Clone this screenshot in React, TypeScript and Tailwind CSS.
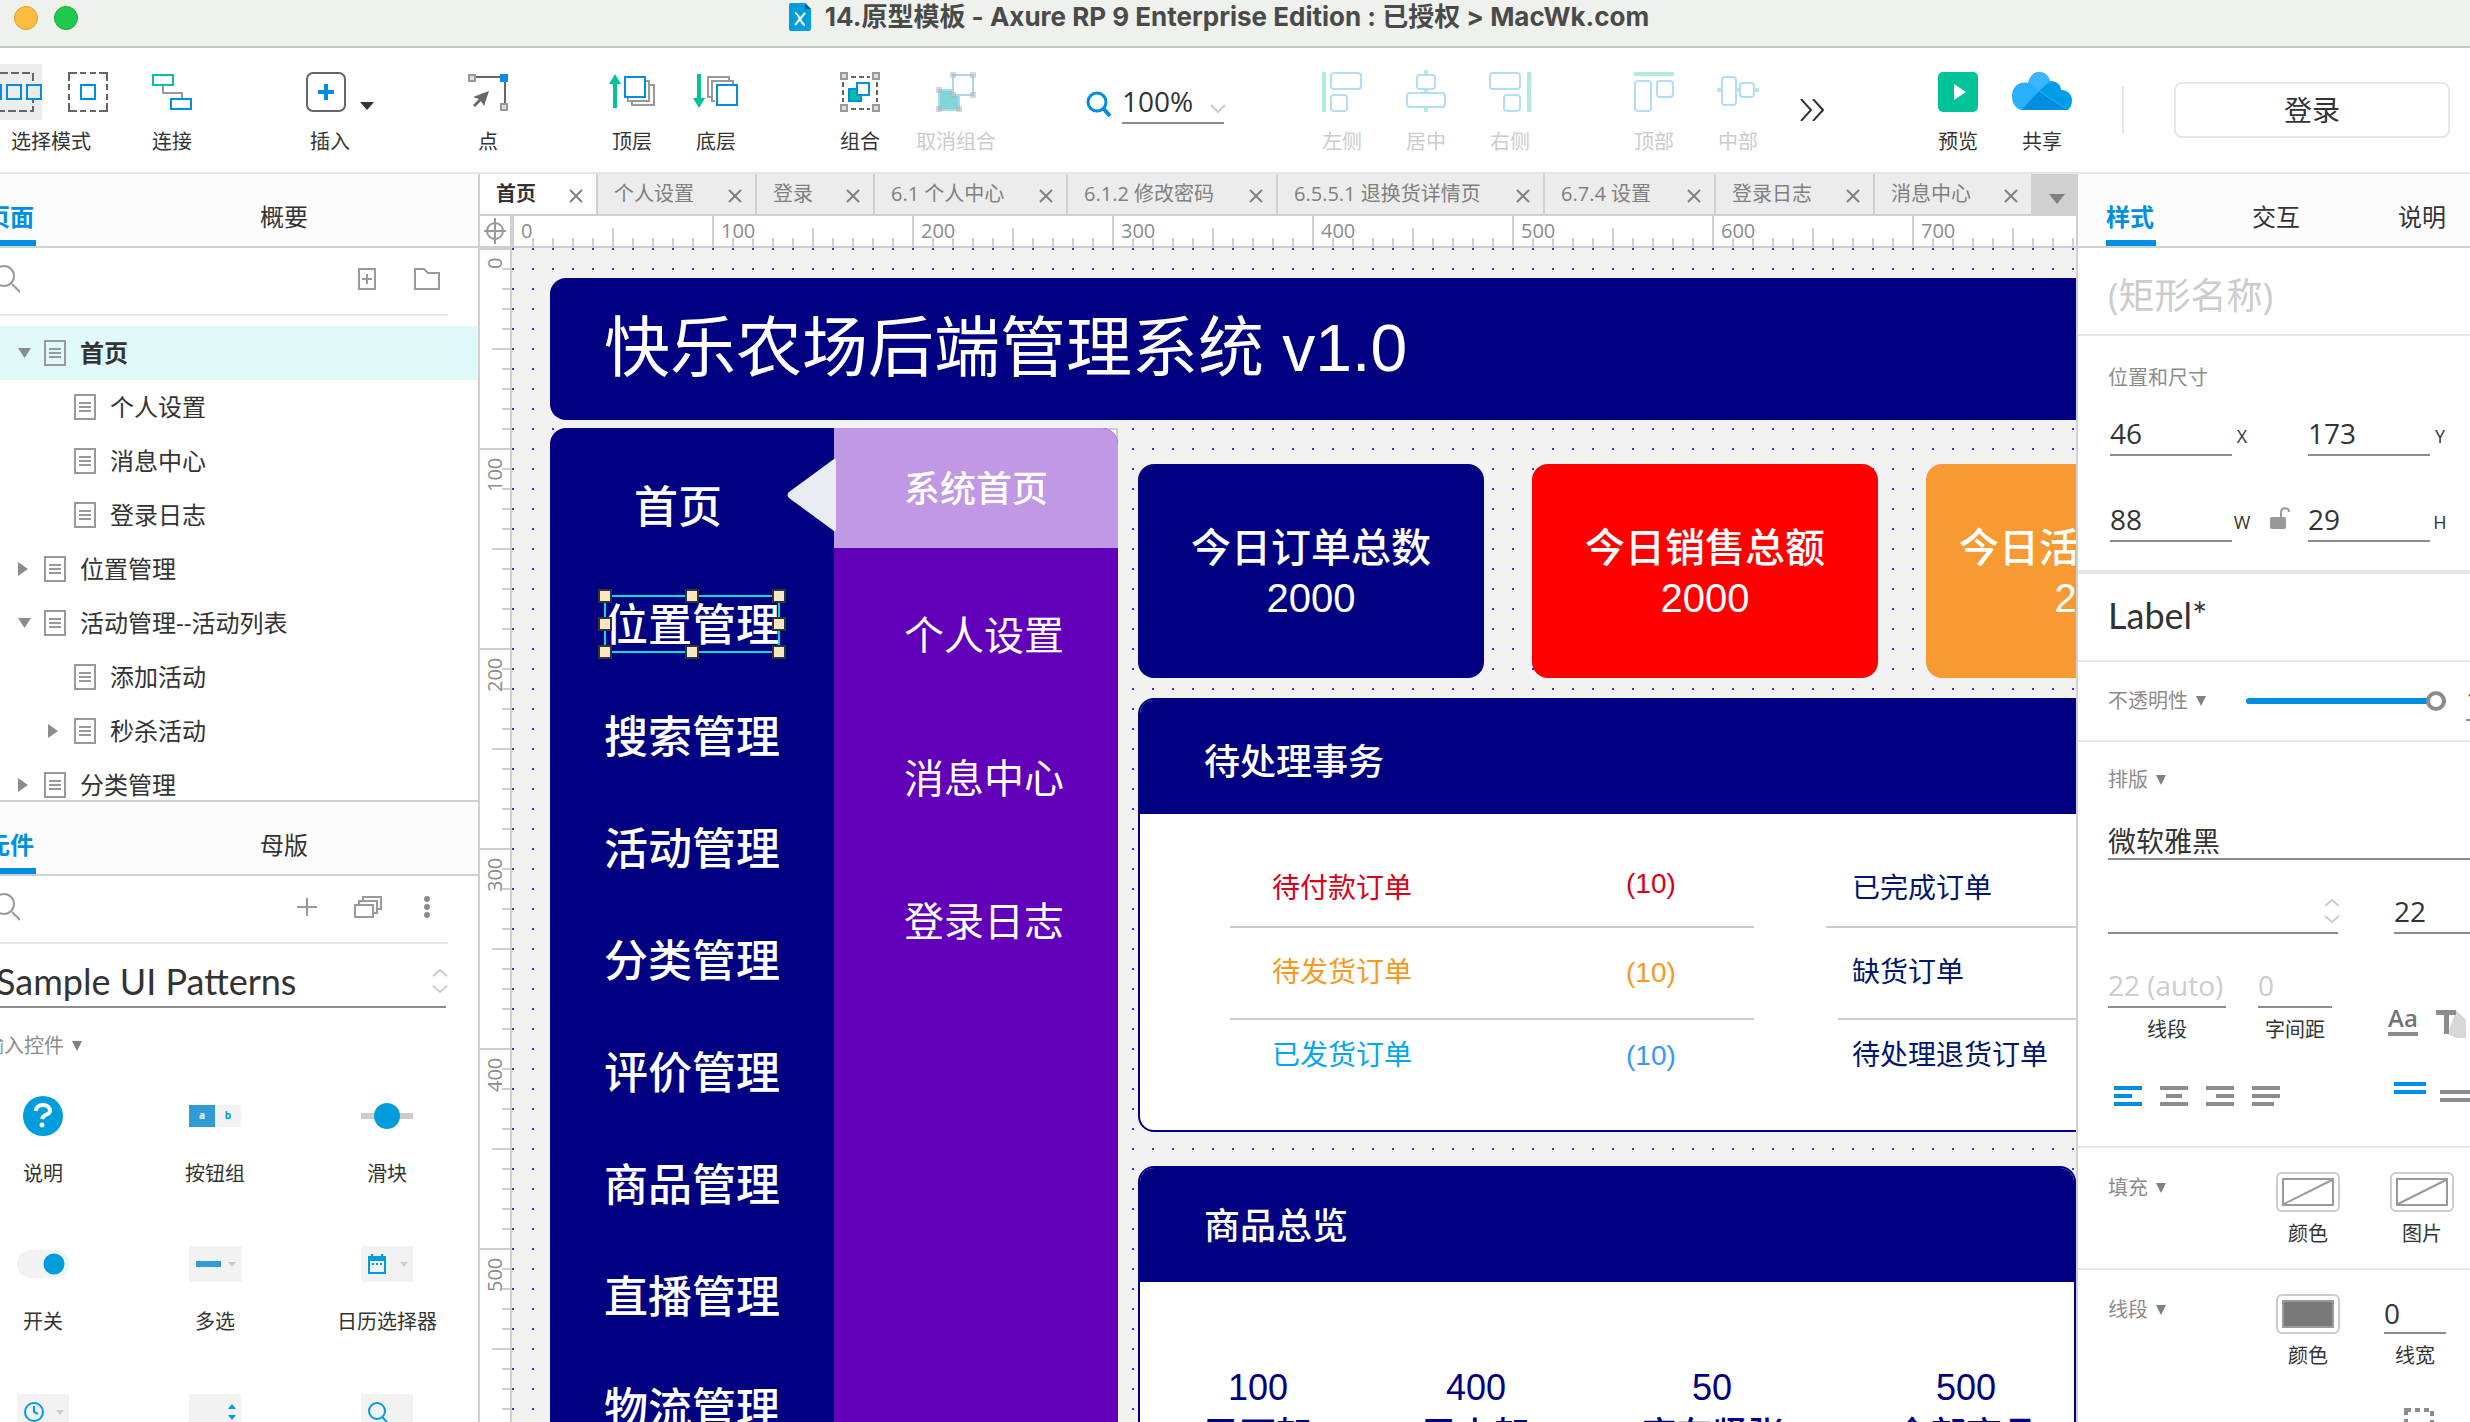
import React, { useState } from 'react';
import clsx from 'clsx';

/* ---------- Toolbar icons ---------- */

const BLUE = '#008fe0';
const GREEN = '#00c39a';
const GREY = '#999999';

const ContainIcon = () => (
  <svg width="42" height="56" viewBox="0 0 42 56" fill="none">
    <path d="M0 9H33V47H0" stroke="#666" strokeWidth="2" strokeDasharray="8 3" />
    <g fill="#ececec" stroke={BLUE} strokeWidth="2">
      <rect x="-10" y="21" width="11" height="14" />
      <rect x="7" y="21" width="14" height="14" />
      <rect x="27" y="21" width="14" height="14" />
    </g>
  </svg>
);

const IntersectIcon = () => (
  <svg width="40" height="40" viewBox="0 0 40 40" fill="none">
    <path d="M1 9V1H9M12 1H18M22 1H28M31 1H39V9M39 12V18M39 22V28M39 31V39H31M28 39H22M18 39H12M9 39H1V31M1 28V22M1 18V12" stroke="#666" strokeWidth="2" />
    <rect x="13" y="13" width="14" height="14" stroke={BLUE} strokeWidth="2" />
  </svg>
);

const ConnectIcon = () => (
  <svg width="40" height="40" viewBox="0 0 40 40" fill="none" strokeWidth="2">
    <path d="M11 14V21H30V26" stroke={GREY} />
    <rect x="1" y="3" width="20" height="10" stroke={GREEN} />
    <rect x="19" y="27" width="20" height="10" stroke={BLUE} />
  </svg>
);

const InsertIcon = () => (
  <svg width="88" height="40" viewBox="0 0 88 40" fill="none">
    <rect x="21" y="1" width="38" height="38" rx="6" stroke="#666" strokeWidth="2" />
    <path d="M40 12V28M32 20H48" stroke={BLUE} strokeWidth="4" />
    <path d="M74 30H88L81 38Z" fill="#333" />
  </svg>
);

const PointIcon = () => (
  <svg width="40" height="40" viewBox="0 0 40 40" fill="none">
    <path d="M8 5H33M37 10V32" stroke="#666" strokeWidth="2" />
    <rect x="1" y="3" width="6" height="6" fill="#ddd" stroke={GREY} strokeWidth="2" />
    <rect x="33" y="32" width="6" height="6" fill="#ddd" stroke={GREY} strokeWidth="2" />
    <rect x="32" y="2" width="8" height="8" fill={BLUE} />
    <path d="M21 19L5 25L11 27L5 33L7 35L13 29L16 34Z" fill="#666" />
  </svg>
);

const FrontIcon = () => (
  <svg width="46" height="40" viewBox="0 0 46 40" fill="none" strokeWidth="2">
    <path d="M6 2L12 12H8V36H4V12H0Z" fill={GREEN} />
    <path d="M19 26V29H40V9H36M23 30V33H45V13H41" stroke={GREY} />
    <rect x="16" y="5" width="20" height="20" stroke={BLUE} />
  </svg>
);

const BackIcon = () => (
  <svg width="46" height="40" viewBox="0 0 46 40" fill="none" strokeWidth="2">
    <path d="M6 36L12 26H8V2H4V26H0Z" fill={GREEN} />
    <path d="M18 25H15V5H36V8M22 29H19V9H40V12" stroke={GREY} />
    <rect x="24" y="13" width="20" height="20" stroke={BLUE} />
  </svg>
);

const GroupIcon = () => (
  <svg width="40" height="40" viewBox="0 0 40 40" fill="none">
    <path d="M11 5H30M11 37H30M3 10V30M37 10V30" stroke="#666" strokeWidth="2" strokeDasharray="5 3" />
    <g fill="#ddd" stroke={GREY} strokeWidth="2">
      <rect x="1" y="1" width="6" height="6" />
      <rect x="33" y="1" width="6" height="6" />
      <rect x="1" y="33" width="6" height="6" />
      <rect x="33" y="33" width="6" height="6" />
    </g>
    <rect x="9" y="17" width="12" height="12" fill={GREEN} stroke={BLUE} strokeWidth="2" />
    <rect x="17" y="11" width="12" height="12" fill="#fff" stroke={BLUE} strokeWidth="2" />
  </svg>
);

const UngroupIcon = () => (
  <svg width="40" height="40" viewBox="0 0 40 40" fill="none">
    <rect x="3" y="18" width="20" height="20" fill="#7fd5d8" stroke="#a8d8f3" strokeWidth="2" />
    <rect x="17" y="3" width="20" height="20" fill="#fff" stroke="#a8d8f3" strokeWidth="2" />
    <path d="M14 0h6v6h-6zM34 0h6v6h-6zM34 20h6v6h-6zM0 15h6v6h-6zM0 34h6v6h-6zM20 34h6v6h-6zM14 20h6v6h-6z" fill="#b4b4b4" fillOpacity=".55" />
  </svg>
);

const LIGHT_BLUE = '#b3ddf7';
const LIGHT_GREEN = '#b2ebe0';

const AlignLeftIcon = () => (
  <svg width="40" height="40" viewBox="0 0 40 40" fill="none" stroke={LIGHT_BLUE} strokeWidth="2">
    <path d="M2 0V40" stroke={LIGHT_GREEN} strokeWidth="4" />
    <rect x="9" y="1" width="30" height="16" rx="3" />
    <rect x="9" y="23" width="16" height="16" rx="3" />
  </svg>
);

const AlignCenterIcon = () => (
  <svg width="40" height="40" viewBox="0 0 40 40" fill="#fff" stroke={LIGHT_BLUE} strokeWidth="2">
    <path d="M20 -2V40" stroke={LIGHT_GREEN} strokeWidth="4" />
    <rect x="11" y="3" width="18" height="14" rx="3" />
    <rect x="1" y="21" width="38" height="14" rx="3" />
  </svg>
);

const AlignRightIcon = () => (
  <svg width="42" height="40" viewBox="0 0 42 40" fill="none" stroke={LIGHT_BLUE} strokeWidth="2">
    <path d="M40 0V40" stroke={LIGHT_GREEN} strokeWidth="4" />
    <rect x="1" y="1" width="30" height="16" rx="3" />
    <rect x="15" y="23" width="16" height="16" rx="3" />
  </svg>
);

const AlignTopIcon = () => (
  <svg width="40" height="40" viewBox="0 0 40 40" fill="none" stroke={LIGHT_BLUE} strokeWidth="2">
    <path d="M0 2H40" stroke={LIGHT_GREEN} strokeWidth="4" />
    <rect x="1" y="9" width="16" height="30" rx="3" />
    <rect x="23" y="9" width="16" height="16" rx="3" />
  </svg>
);

const AlignMiddleIcon = () => (
  <svg width="42" height="40" viewBox="0 0 42 40" fill="#fff" stroke={LIGHT_BLUE} strokeWidth="2">
    <path d="M0 18H42" stroke={LIGHT_GREEN} strokeWidth="4" />
    <rect x="5" y="5" width="14" height="28" rx="3" />
    <rect x="23" y="11" width="14" height="14" rx="3" />
  </svg>
);

const PreviewIcon = () => (
  <svg width="40" height="40" viewBox="0 0 40 40">
    <rect width="40" height="40" rx="5" fill={GREEN} />
    <path d="M16 12L28 20L16 28Z" fill="#fff" />
  </svg>
);

const CloudIcon = () => (
  <svg width="60" height="40" viewBox="0 0 60 40">
    <path d="M9 38C3 36 0 31 0 24C0 15 7 9 16 11C18 4 22 0 27 0C33 0 37 4 38 9L27 20Z" fill="#29b0fb" />
    <path d="M16 11C18 4 22 0 27 0C33 0 37 4 38 9L27 20C25 15 21 11 16 11Z" fill="#39b7fa" />
    <path d="M27 19L38 9C44 9 49 12 49 18C56 18 60 23 60 28C60 33 58 36 56 38Z" fill="#009eea" />
    <path d="M9 38L27 19L56 38Z" fill="#008fe0" />
  </svg>
);

/* ---------- Small shared glyphs ---------- */

const SearchIcon = () => (
  <svg width="28" height="28" viewBox="0 0 28 28" fill="none" stroke={GREY} strokeWidth="2">
    <circle cx="12" cy="11" r="10" />
    <path d="M20 19L28 27" />
  </svg>
);

const PageIcon = () => (
  <svg width="22" height="26" viewBox="0 0 22 26" fill="none" stroke={GREY} strokeWidth="2" className="shrink-0">
    <rect x="1" y="1" width="20" height="24" />
    <path d="M5 9H17M5 13H17M5 17H17" />
  </svg>
);

const CloseIcon = () => (
  <svg width="14" height="14" viewBox="0 0 14 14" stroke="#808080" strokeWidth="2">
    <path d="M1 1L13 13M13 1L1 13" />
  </svg>
);

const Caret = () => (
  <svg width="10" height="10" viewBox="0 0 10 10" fill="#808080">
    <path d="M0 0H10L5 10Z" />
  </svg>
);

const UpDown = () => (
  <svg width="16" height="26" viewBox="0 0 16 26" fill="none" stroke="#ccc" strokeWidth="2" className="pointer-events-none">
    <path d="M1 8L8 2L15 8M1 18L8 24L15 18" />
  </svg>
);

/* ---------- Toolbar ---------- */

interface ToolProps {
  icon: React.ReactNode;
  label: string;
  muted?: boolean;
  className?: string;
}

const Tool: React.FC<ToolProps> = ({ icon, label, muted, className }) => (
  <button
    disabled={muted}
    className={clsx('flex w-[84px] shrink-0 flex-col items-center gap-4 pt-6 text-xl leading-7', muted ? 'text-[#cccccc]' : 'text-[#333333]', className)}
  >
    <span className="flex h-10 w-full justify-center [&>svg]:shrink-0 [&>svg]:overflow-visible">{icon}</span>
    <span className="whitespace-nowrap">{label}</span>
  </button>
);

const Toolbar = () => (
  <div className="flex h-[126px] shrink-0 border-b-2 border-[#e6e6e6] bg-white">
    <div className="flex w-[130px] shrink-0 flex-col text-xl leading-7 text-[#333333]">
      <div className="flex items-center pt-4">
        <button aria-label="包含选中" className="h-14 bg-[#ececec]"><ContainIcon /></button>
        <button aria-label="相交选中" className="ml-[26px]"><IntersectIcon /></button>
      </div>
      <span className="ml-[11px] mt-2">选择模式</span>
    </div>
    <Tool icon={<ConnectIcon />} label="连接" />
    <Tool icon={<InsertIcon />} label="插入" className="ml-[74px]" />
    <Tool icon={<PointIcon />} label="点" className="ml-[74px]" />
    <Tool icon={<FrontIcon />} label="顶层" className="ml-[60px]" />
    <Tool icon={<BackIcon />} label="底层" />
    <Tool icon={<GroupIcon />} label="组合" className="ml-[60px]" />
    <Tool icon={<UngroupIcon />} label="取消组合" muted className="ml-3" />
    <label className="ml-[88px] flex w-[140px] shrink-0 items-start">
      <svg width="26" height="28" viewBox="0 0 26 28" fill="none" stroke={BLUE} strokeWidth="3" className="mt-[43px] shrink-0">
        <circle cx="11" cy="11" r="9" />
        <path d="M17 17L24 25" strokeWidth="4" />
      </svg>
      <span className="relative ml-2.5 mt-8">
        <input aria-label="缩放" defaultValue="100%" className="h-11 w-[102px] border-b-2 border-[#8c8c8c] bg-transparent text-[28px] text-[#333333] outline-none" />
        <svg width="16" height="10" viewBox="0 0 16 10" fill="none" stroke="#ccc" strokeWidth="2" className="absolute -right-0.5 top-6">
          <path d="M1 1L8 8L15 1" />
        </svg>
      </span>
    </label>
    <Tool icon={<AlignLeftIcon />} label="左侧" muted className="ml-[74px]" />
    <Tool icon={<AlignCenterIcon />} label="居中" muted />
    <Tool icon={<AlignRightIcon />} label="右侧" muted />
    <Tool icon={<AlignTopIcon />} label="顶部" muted className="ml-[60px]" />
    <Tool icon={<AlignMiddleIcon />} label="中部" muted />
    <button aria-label="更多" className="ml-5 mt-[50px] h-6 shrink-0">
      <svg width="24" height="22" viewBox="0 0 24 22" fill="none" stroke="#333" strokeWidth="2">
        <path d="M1 0L11 11L1 22M13 0L23 11L13 22" />
      </svg>
    </button>
    <div className="ml-auto flex shrink-0">
      <Tool icon={<PreviewIcon />} label="预览" />
      <Tool icon={<CloudIcon />} label="共享" />
      <div className="ml-[38px] mt-[38px] h-12 w-0.5 bg-[#e6e6e6]" />
      <button className="ml-[50px] mr-5 mt-[34px] h-14 w-[276px] rounded-lg border-2 border-[#e6e6e6] text-[28px] text-[#333333]">登录</button>
    </div>
  </div>
);

/* ---------- Left panels ---------- */

interface TreeNode {
  name: string;
  depth: number;
  state?: 'open' | 'closed';
}

const PAGES: TreeNode[] = [
  { name: '首页', depth: 0, state: 'open' },
  { name: '个人设置', depth: 1 },
  { name: '消息中心', depth: 1 },
  { name: '登录日志', depth: 1 },
  { name: '位置管理', depth: 0, state: 'closed' },
  { name: '活动管理--活动列表', depth: 0, state: 'open' },
  { name: '添加活动', depth: 1 },
  { name: '秒杀活动', depth: 1, state: 'closed' },
  { name: '分类管理', depth: 0, state: 'closed' },
];

const PanelTabs: React.FC<{ tabs: string[]; className: string }> = ({ tabs, className }) => (
  <div className={clsx('flex h-[74px] shrink-0 border-b-2 border-[#d0d0d0] bg-[#fcfcfc] text-2xl text-[#333333]', className)}>
    {tabs.map((tab, i) => (
      <button
        key={tab}
        className={clsx('flex w-[50px] shrink-0 flex-col items-start justify-end whitespace-nowrap', i === 0 ? 'font-bold text-[#008fe0]' : '')}
      >
        <span className="mb-[5px] leading-9">{tab}</span>
        <span className={clsx('h-1.5 w-full', i === 0 && 'bg-[#008fe0]')} />
      </button>
    ))}
  </div>
);

const PagesPanel = () => {
  const [current, setCurrent] = useState('首页');

  return (
    <section className="flex h-[628px] shrink-0 flex-col overflow-hidden border-b-2 border-[#d0d0d0]">
      <PanelTabs tabs={['页面', '概要']} className="-ml-3.5 gap-[224px]" />
      <div className="mr-[30px] flex h-[68px] shrink-0 items-center border-b-2 border-[#e6e6e6] pb-1">
        <button aria-label="搜索页面" className="-ml-2"><SearchIcon /></button>
        <button aria-label="添加页面" className="ml-auto">
          <svg width="18" height="22" viewBox="0 0 18 22" fill="none" stroke={GREY} strokeWidth="2">
            <path d="M1 1H17V21H1ZM4 11H14M9 6V16" />
          </svg>
        </button>
        <button aria-label="添加文件夹" className="ml-[38px] mr-2">
          <svg width="26" height="22" viewBox="0 0 26 22" fill="none" stroke={GREY} strokeWidth="2">
            <path d="M1 1H10L14 5H25V21H1Z" />
          </svg>
        </button>
      </div>
      <ul className="pt-2.5">
        {PAGES.map((page) => (
          <li key={page.name}>
            <button
              onClick={() => setCurrent(page.name)}
              className={clsx(
                'flex h-[54px] w-full items-center text-2xl text-[#333333]',
                page.depth === 0 ? 'pl-[18px]' : 'pl-12',
                current === page.name && 'bg-[#e0fafa] font-bold'
              )}
            >
              <svg width="14" height="14" viewBox="0 0 14 14" fill="#8c8c8c" className="mr-3 shrink-0">
                {page.state === 'open' && <path d="M0 2H13L6.500 12Z" />}
                {page.state === 'closed' && <path d="M0 0V14L10 7Z" />}
              </svg>
              <PageIcon />
              <span className="ml-3.5">{page.name}</span>
            </button>
          </li>
        ))}
      </ul>
    </section>
  );
};

const SKY = '#009ddc';

const WIDGETS: { name: string; icon: React.ReactNode }[] = [
  {
    name: '说明',
    icon: (
      <svg width="52" height="40" viewBox="0 0 52 40">
        <circle cx="26" cy="20" r="20" fill={SKY} />
        <path d="M19 15C19 11 22 9 26 9C30 9 33 11 33 15C33 19 26 18 25 23" fill="none" stroke="#fff" strokeWidth="4" />
        <circle cx="25" cy="29" r="2.500" fill="#fff" />
      </svg>
    ),
  },
  {
    name: '按钮组',
    icon: (
      <span className="flex h-[22px] w-[52px] text-center text-[10px] font-bold leading-5">
        <span className="w-1/2 bg-[#2f9cd6] text-white">a</span>
        <span className="w-1/2 bg-[#f2f2f2] text-[#009ddc]">b</span>
      </span>
    ),
  },
  {
    name: '滑块',
    icon: (
      <svg width="52" height="40" viewBox="0 0 52 40">
        <path d="M0 20H52" stroke="#ccc" strokeWidth="6" />
        <circle cx="26" cy="20" r="13" fill={SKY} />
      </svg>
    ),
  },
  {
    name: '开关',
    icon: (
      <svg width="52" height="40" viewBox="0 0 52 40">
        <rect y="6" width="52" height="28" rx="14" fill="#f2f2f2" />
        <circle cx="37" cy="20" r="10.500" fill={SKY} />
      </svg>
    ),
  },
  {
    name: '多选',
    icon: (
      <svg width="52" height="40" viewBox="0 0 52 40">
        <rect y="2" width="52" height="36" fill="#f2f2f2" />
        <path d="M7 20H32" stroke="#2f9cd6" strokeWidth="6" />
        <path d="M39 18H47L43 23Z" fill="#ccc" />
      </svg>
    ),
  },
  {
    name: '日历选择器',
    icon: (
      <svg width="52" height="40" viewBox="0 0 52 40">
        <rect y="2" width="52" height="36" fill="#f2f2f2" />
        <path d="M7 12H25V17H7ZM10 10h2v3h-2zM20 10h2v3h-2z" fill={SKY} />
        <path d="M8 13H24V29H8Z" fill="none" stroke={SKY} strokeWidth="2" />
        <path d="M11 20H22" stroke={SKY} strokeWidth="2" strokeDasharray="2 2" />
        <path d="M39 18H47L43 23Z" fill="#ccc" />
      </svg>
    ),
  },
  {
    name: '时间选择器',
    icon: (
      <svg width="52" height="40" viewBox="0 0 52 40">
        <rect y="2" width="52" height="36" fill="#f2f2f2" />
        <circle cx="17" cy="20" r="9" fill="none" stroke={SKY} strokeWidth="2" />
        <path d="M17 14V20L21 22" fill="none" stroke={SKY} strokeWidth="2" />
        <path d="M39 18H47L43 23Z" fill="#ccc" />
      </svg>
    ),
  },
  {
    name: '数字输入',
    icon: (
      <svg width="52" height="40" viewBox="0 0 52 40">
        <rect y="2" width="52" height="36" fill="#f2f2f2" />
        <path d="M39 17L43 12L47 17ZM39 23L43 28L47 23Z" fill={SKY} />
      </svg>
    ),
  },
  {
    name: '搜索框',
    icon: (
      <svg width="52" height="40" viewBox="0 0 52 40">
        <rect y="2" width="52" height="36" fill="#f2f2f2" />
        <circle cx="16" cy="19" r="8" fill="none" stroke={SKY} strokeWidth="2" />
        <path d="M21 25L26 30" stroke={SKY} strokeWidth="2" />
      </svg>
    ),
  },
];

const WidgetsPanel = () => (
  <section className="flex min-h-0 flex-1 flex-col overflow-hidden">
    <PanelTabs tabs={['元件', '母版']} className="-ml-3.5 gap-[224px]" />
    <div className="mr-[30px] flex h-[68px] shrink-0 items-center border-b-2 border-[#e6e6e6] pb-1">
      <button aria-label="搜索元件" className="-ml-2"><SearchIcon /></button>
      <button aria-label="添加元件库" className="ml-auto">
        <svg width="20" height="20" viewBox="0 0 20 20" stroke={GREY} strokeWidth="2"><path d="M0 10H20M10 1V19" /></svg>
      </button>
      <button aria-label="管理元件库" className="ml-[37px]">
        <svg width="28" height="22" viewBox="0 0 28 22" fill="none" stroke={GREY} strokeWidth="2">
          <rect x="1" y="9" width="18" height="12" />
          <path d="M5 8V5H23V17H20M9 4V1H27V13H24" />
        </svg>
      </button>
      <button aria-label="元件库选项" className="ml-[42px] mr-[18px]">
        <svg width="6" height="24" viewBox="0 0 6 24" fill="#8c8c8c">
          <circle cx="3" cy="4" r="3" /><circle cx="3" cy="12" r="3" /><circle cx="3" cy="20" r="3" />
        </svg>
      </button>
    </div>
    <div className="relative -ml-1 mr-8 flex h-16 shrink-0 items-center border-b-2 border-[#8c8c8c]">
      <select aria-label="元件库" className="w-full appearance-none bg-transparent pt-3 font-['Lato',sans-serif] text-4xl leading-[48px] text-[#333333] outline-none">
        <option>Sample UI Patterns</option>
      </select>
      <span className="absolute -right-0.5 top-6"><UpDown /></span>
    </div>
    <button className="-ml-4 mb-[34px] mt-[22px] flex items-center gap-2 text-xl leading-8 text-[#8c8c8c]">
      输入控件 <Caret />
    </button>
    <div className="-ml-[43px] grid w-[516px] shrink-0 grid-cols-3">
      {WIDGETS.map((w) => (
        <button key={w.name} className="flex h-[148px] flex-col items-center gap-6 text-xl leading-7 text-[#333333]">
          <span className="flex h-10 items-center">{w.icon}</span>
          {w.name}
        </button>
      ))}
    </div>
  </section>
);

/* ---------- Canvas ---------- */

const TABS = [
  { name: '首页', width: 'w-[118px]' },
  { name: '个人设置', width: 'w-[159px]' },
  { name: '登录', width: 'w-[118px]' },
  { name: '6.1 个人中心', width: 'w-[193px]' },
  { name: '6.1.2 修改密码', width: 'w-[210px]' },
  { name: '6.5.5.1 退换货详情页', width: 'w-[267px]' },
  { name: '6.7.4 设置', width: 'w-[171px]' },
  { name: '登录日志', width: 'w-[159px]' },
  { name: '消息中心', width: 'w-[158px]' },
];

const TabStrip = () => (
  <div className="flex h-[42px] shrink-0 overflow-hidden border-b-2 border-[#d0d0d0] bg-[#ececec]">
    {TABS.map((tab, i) => (
      <div
        key={tab.name}
        className={clsx('flex shrink-0 justify-between border-r-2 border-[#d0d0d0] pl-4 pr-[13px] text-xl', tab.width, i === 0 ? 'bg-white font-bold text-[#333333]' : 'text-[#808080]')}
      >
        <button className="whitespace-nowrap leading-9">{tab.name}</button>
        <button aria-label={'关闭 ' + tab.name} className="mt-[15px] h-3.5"><CloseIcon /></button>
      </div>
    ))}
    <button aria-label="全部标签" className="flex flex-1 items-center justify-center bg-[#d0d0d0] pl-1 pt-2.5">
      <svg width="16" height="10" viewBox="0 0 16 10" fill="#808080"><path d="M0 0H16L8 10Z" /></svg>
    </button>
  </div>
);

const MARKS = [0, 100, 200, 300, 400, 500, 600, 700, 800];

const TopRuler = () => (
  <div className="flex h-8 shrink-0 border-b-2 border-[#d0d0d0] bg-white">
    <div className="flex w-8 shrink-0 items-center justify-center border-r-2 border-[#d0d0d0]">
      <svg width="22" height="26" viewBox="0 0 22 26" fill="none" stroke={GREY} strokeWidth="2">
        <circle cx="11" cy="13" r="8" />
        <path d="M11 0V26M0 13H22" />
      </svg>
    </div>
    <div className="flex flex-1 overflow-hidden">
      {MARKS.map((m) => (
        <div key={m} className="relative w-[200px] shrink-0 border-l-2 border-[#d0d0d0] pl-[7px] text-xl leading-[30px] text-[#8c8c8c]">
          {m}
          <svg width="200" height="30" viewBox="0 0 200 30" stroke="#d0d0d0" strokeWidth="2" className="absolute -left-0.5 top-0">
            <path d="M21 22V30M41 22V30M61 22V30M81 22V30M101 12V30M121 22V30M141 22V30M161 22V30M181 22V30" />
          </svg>
        </div>
      ))}
    </div>
  </div>
);

const SideRuler = () => (
  <div className="flex w-8 shrink-0 flex-col overflow-hidden border-r-2 border-[#d0d0d0] bg-white">
    {MARKS.slice(0, 7).map((m) => (
      <div key={m} className="relative h-[200px] shrink-0 border-t-2 border-[#d0d0d0] text-xl leading-[30px] text-[#8c8c8c]">
        <span className="block h-full rotate-180 pb-2 text-right [writing-mode:vertical-rl]">{m}</span>
        <svg width="30" height="200" viewBox="0 0 30 200" stroke="#d0d0d0" strokeWidth="2" className="absolute -top-0.5 left-0">
          <path d="M22 21H30M22 41H30M22 61H30M22 81H30M12 101H30M22 121H30M22 141H30M22 161H30M22 181H30" />
        </svg>
      </div>
    ))}
  </div>
);

const HANDLES = [
  '-left-2 -top-2', 'left-1/2 -ml-[7px] -top-2', '-right-2 -top-2',
  '-left-2 top-1/2 -mt-[7px]', '-right-2 top-1/2 -mt-[7px]',
  '-left-2 -bottom-2', 'left-1/2 -ml-[7px] -bottom-2', '-right-2 -bottom-2',
];

const MENU = ['位置管理', '搜索管理', '活动管理', '分类管理', '评价管理', '商品管理', '直播管理', '物流管理'];
const SUBMENU = ['个人设置', '消息中心', '登录日志'];

const CARDS = [
  { title: '今日订单总数', value: '2000', color: 'bg-[#000080]' },
  { title: '今日销售总额', value: '2000', color: 'bg-[#ff0000]' },
  { title: '今日活跃会员数', value: '2000', color: 'bg-[#f79a31]' },
];

const ORDERS = [
  { name: '待付款订单', color: 'text-[#d9001b]', count: 'text-[#d9001b]', other: '已完成订单' },
  { name: '待发货订单', color: 'text-[#f59a23]', count: 'text-[#f59a23]', other: '缺货订单' },
  { name: '已发货订单', color: 'text-[#02a7f0]', count: 'text-[#3399ff]', other: '待处理退货订单' },
];

const STATS = [
  { value: '100', name: '已下架', width: 'w-[216px]' },
  { value: '400', name: '已上架', width: 'w-[220px]' },
  { value: '50', name: '库存紧张', width: 'w-[252px]' },
  { value: '500', name: '全部商品', width: 'w-[256px]' },
];

const Stage = () => (
  <div className="relative min-w-0 flex-1 overflow-hidden bg-[#f2f2f2] bg-[conic-gradient(from_270deg_at_2px_2px,#3333f5_25%,transparent_0)] bg-[size:20px_20px] font-['Liberation_Sans','Noto_Sans_CJK_SC',sans-serif] text-white">
    {/* Title banner */}
    <div className="absolute left-[38px] right-0 top-[30px] flex h-[142px] items-center rounded-l-2xl bg-[#000080] pb-0.5 pl-[54px] text-[66px]">
      快乐农场后端管理系统 v1.0
    </div>

    {/* Main menu */}
    <div className="absolute bottom-0 left-[38px] top-[180px] w-[284px] overflow-hidden rounded-tl-2xl bg-[#000080] pt-4 text-[44px] font-medium">
      <div className="mr-7 flex h-[124px] items-center justify-center pt-1">首页</div>
      {MENU.map((item, i) => (
        <div key={item} className="flex h-28 shrink-0 items-center justify-center">
          <div className="relative flex h-[58px] items-center pt-1">
            {item}
            {i === 0 && (
              <div className="absolute inset-0 border-2 border-[#00e0d8]">
                {HANDLES.map((h) => (
                  <span key={h} className={clsx('absolute size-3.5 border-2 border-[#333333] bg-[#fde6c4]', h)} />
                ))}
              </div>
            )}
          </div>
        </div>
      ))}
    </div>

    {/* Sub menu */}
    <div className="absolute left-[590px] top-[180px] size-4 border-r-2 border-t-2 border-[#cccccc] bg-white" />
    <div className="absolute bottom-0 left-[322px] top-[180px] w-[284px] overflow-hidden rounded-tr-2xl bg-[#6200b9]">
      <div className="flex h-[120px] items-center bg-[#c098e4] pl-[70px] pt-1 text-4xl font-medium">系统首页</div>
      <div className="pt-4">
        {SUBMENU.map((item) => (
          <div key={item} className="flex h-[143px] items-center pl-[70px] text-[40px]">{item}</div>
        ))}
      </div>
    </div>
    <svg width="50" height="74" viewBox="0 0 50 74" className="absolute left-[275px] top-[210px]">
      <path d="M47 1Q49 0 49 3V71Q49 74 47 73L2 40Q-1 37 2 34Z" fill="#e9ecf2" />
    </svg>

    {/* Summary cards */}
    <div className="absolute left-[626px] top-[216px] flex gap-12">
      {CARDS.map((c) => (
        <div key={c.title} className={clsx('flex h-[214px] w-[346px] shrink-0 flex-col items-center justify-center rounded-2xl pt-1 text-[40px] font-medium leading-[50px]', c.color)}>
          <span>{c.title}</span>
          <span>{c.value}</span>
        </div>
      ))}
    </div>

    {/* Pending orders */}
    <div className="absolute left-[626px] top-[450px] h-[434px] w-[1560px] overflow-hidden rounded-2xl border-2 border-[#000080] bg-white">
      <div className="flex h-[114px] items-center bg-[#000080] pl-16 pt-3 text-4xl font-medium">待处理事务</div>
      <div className="flex gap-[72px] pl-[90px] pt-7 text-[28px]">
        <div className="w-[524px]">
          {ORDERS.map((o, i) => (
            <div key={o.name} className={clsx('flex items-center pl-[42px]', i === 0 ? 'h-[86px] pt-2.5' : i === 1 ? 'h-[92px]' : 'h-[72px]', i < 2 && 'border-b-2 border-[#cccccc]')}>
              <span className={clsx('w-[354px]', o.color)}>{o.name}</span>
              <span className={clsx(o.count, i === 0 && 'pb-2.5')}>(10)</span>
            </div>
          ))}
        </div>
        <div className="w-[524px] text-[#00186b]">
          {ORDERS.map((o, i) => (
            <div key={o.other} className={clsx('flex items-center', i === 0 ? 'h-[86px] pl-[26px] pt-2.5' : i === 1 ? 'ml-3 h-[92px] pl-3.5' : 'h-[72px] pl-[26px]', i < 2 && 'border-b-2 border-[#cccccc]')}>
              {o.other}
            </div>
          ))}
        </div>
      </div>
    </div>

    {/* Goods overview */}
    <div className="absolute left-[626px] top-[918px] h-[434px] w-[938px] overflow-hidden rounded-2xl border-2 border-[#000080] bg-white">
      <div className="flex h-[114px] items-center bg-[#000080] pl-16 pt-1 text-4xl font-medium">商品总览</div>
      <div className="flex pl-[10px] pt-[82px] text-center text-4xl font-medium leading-[48px] text-[#000080]">
        {STATS.map((s) => (
          <div key={s.name} className={clsx('flex shrink-0 flex-col', s.width)}>
            <span>{s.value}</span>
            <span>{s.name}</span>
          </div>
        ))}
      </div>
    </div>
  </div>
);

/* ---------- Style panel ---------- */

const field = 'border-b-2 border-[#8c8c8c] bg-transparent text-[28px] leading-9 text-[#333333] outline-none';

const NumberField: React.FC<{ name: string; value: string }> = ({ name, value }) => (
  <label className="flex items-end text-lg leading-10 text-[#333333]">
    <input defaultValue={value} className={clsx('h-11 w-[122px]', field)} />
    <span className="w-5 text-center">{name}</span>
  </label>
);

const SectionTitle: React.FC<{ children: React.ReactNode }> = ({ children }) => (
  <button className="flex h-8 shrink-0 items-center gap-2 whitespace-nowrap text-xl text-[#8c8c8c]">
    {children} <Caret />
  </button>
);

const Swatch: React.FC<{ label: string; filled?: boolean }> = ({ label, filled }) => (
  <button className="flex w-16 flex-col items-center text-xl leading-7 text-[#333333]">
    <svg width="64" height="40" viewBox="0 0 64 40" fill="none" strokeWidth="2" className="mb-2">
      <rect x="1" y="1" width="62" height="38" rx="5" stroke="#ccc" />
      <rect x="7" y="7" width="50" height="26" stroke={GREY} fill={filled ? '#797979' : '#fff'} />
      {!filled && <path d="M8 32L56 8" stroke={GREY} />}
    </svg>
    {label}
  </button>
);

const TEXT_ALIGN = [
  { name: '左对齐', d: 'M0 2H28M0 10H18M0 18H28' },
  { name: '居中对齐', d: 'M0 2H28M6 10H22M0 18H28' },
  { name: '右对齐', d: 'M0 2H28M10 10H28M0 18H28' },
  { name: '两端对齐', d: 'M0 2H28M0 10H28M0 18H22' },
];

const StylePanel = () => (
  <aside className="flex w-[392px] shrink-0 flex-col overflow-hidden bg-white">
    <PanelTabs tabs={['样式', '交互', '说明']} className="gap-24 pl-7" />
    <div className="flex h-[88px] shrink-0 items-center border-b-2 border-[#e6e6e6] pl-[30px]">
      <input aria-label="名称" placeholder="(矩形名称)" className="w-full bg-transparent pt-2.5 text-4xl outline-none placeholder:text-[#cccccc]" />
    </div>

    <div className="h-[238px] shrink-0 border-b-4 border-[#e6e6e6] pl-[30px] pt-[26px]">
      <h3 className="text-xl leading-8 text-[#8c8c8c]">位置和尺寸</h3>
      <div className="mt-[18px] flex gap-14 pl-0.5">
        <NumberField name="X" value="46" />
        <NumberField name="Y" value="173" />
      </div>
      <div className="mt-[42px] flex items-center pl-0.5">
        <NumberField name="W" value="88" />
        <button aria-label="锁定宽高比" className="mx-[18px] pb-1">
          <svg width="20" height="22" viewBox="0 0 20 22" fill="none">
            <rect y="10" width="16" height="12" rx="2" fill={GREY} />
            <path d="M11 10V5C11 0 19 0 19 5" stroke={GREY} strokeWidth="2" />
          </svg>
        </button>
        <NumberField name="H" value="29" />
      </div>
    </div>

    <div className="flex h-[88px] shrink-0 items-center border-b-2 border-[#e6e6e6] pb-1 pl-[30px] font-['Lato',sans-serif] text-4xl text-[#333333]">Label*</div>

    <div className="flex h-20 shrink-0 items-center border-b-2 border-[#e6e6e6] pl-[30px]">
      <SectionTitle>不透明性</SectionTitle>
      <input
        type="range"
        aria-label="不透明性"
        defaultValue={100}
        className="ml-10 h-1.5 w-[200px] shrink-0 appearance-none rounded-full bg-[#008fe0] [&::-webkit-slider-thumb]:size-5 [&::-webkit-slider-thumb]:appearance-none [&::-webkit-slider-thumb]:rounded-full [&::-webkit-slider-thumb]:border-4 [&::-webkit-slider-thumb]:border-solid [&::-webkit-slider-thumb]:border-[#8c8c8c] [&::-webkit-slider-thumb]:bg-white"
      />
      <input aria-label="不透明度数值" defaultValue="100" className={clsx('ml-5 h-10 w-16 shrink-0', field)} />
    </div>

    <div className="h-[406px] shrink-0 border-b-2 border-[#e6e6e6] pl-[30px] pt-[22px]">
      <SectionTitle>排版</SectionTitle>
      <select aria-label="字体" className="mt-5 block h-11 w-full appearance-none border-b-2 border-[#8c8c8c] bg-transparent pt-1 text-[28px] text-[#333333] outline-none">
        <option>微软雅黑</option>
      </select>
      <div className="mt-[30px] flex">
        <div className="relative w-[230px] shrink-0">
          <select aria-label="字形" className="h-11 w-full appearance-none border-b-2 border-[#8c8c8c] bg-transparent text-[28px] outline-none">
            <option> </option>
          </select>
          <span className="absolute -right-0.5 top-2"><UpDown /></span>
        </div>
        <input aria-label="字号" defaultValue="22" className={clsx('ml-14 h-11 w-20 shrink-0', field)} />
      </div>
      <div className="mt-[30px] flex text-xl leading-7 text-[#333333]">
        <label className="flex w-[118px] shrink-0 flex-col items-center">
          <input placeholder="22 (auto)" className={clsx('mb-2 h-11 w-full placeholder:text-[#cccccc]', field)} />
          线段
        </label>
        <label className="ml-8 flex w-[74px] shrink-0 flex-col items-center">
          <input placeholder="0" className={clsx('mb-2 h-11 w-full placeholder:text-[#cccccc]', field)} />
          字间距
        </label>
        <button className="ml-14 mt-10 h-8 w-[30px] shrink-0 border-b-4 border-[#8c8c8c] text-2xl font-semibold leading-7 text-[#737373]">Aa</button>
        <button aria-label="文字阴影" className="ml-[18px] mt-[46px] h-7 shrink-0">
          <svg width="30" height="28" viewBox="0 0 30 28">
            <path d="M20 0L30 10V28H20L12 24Z" fill="#d8d8d8" />
            <path d="M0 0H20V5H13V24H8V5H0Z" fill="#8c8c8c" />
          </svg>
        </button>
      </div>
      <div className="mt-9 flex pl-1.5">
        {TEXT_ALIGN.map((a, i) => (
          <button key={a.name} aria-label={a.name} className="mr-[18px] mt-1.5 shrink-0">
            <svg width="28" height="20" viewBox="0 0 28 20" stroke={i === 0 ? BLUE : '#8c8c8c'} strokeWidth="4">
              <path d={a.d} />
            </svg>
          </button>
        ))}
        <button aria-label="顶部对齐" className="ml-24 mt-0.5 h-3 shrink-0">
          <svg width="32" height="12" viewBox="0 0 32 12" stroke={BLUE} strokeWidth="4"><path d="M0 2H32M0 10H32" /></svg>
        </button>
        <button aria-label="中部对齐" className="ml-3.5 mt-2.5 h-3 shrink-0">
          <svg width="32" height="12" viewBox="0 0 32 12" stroke="#8c8c8c" strokeWidth="4"><path d="M0 2H32M0 10H32" /></svg>
        </button>
      </div>
    </div>

    <div className="flex h-[122px] shrink-0 border-b-2 border-[#e6e6e6] pl-[30px] pt-6">
      <div className="w-[168px]"><SectionTitle>填充</SectionTitle></div>
      <Swatch label="颜色" />
      <div className="w-[50px]" />
      <Swatch label="图片" />
    </div>

    <div className="flex shrink-0 pl-[30px] pt-6">
      <div className="w-[168px]"><SectionTitle>线段</SectionTitle></div>
      <Swatch label="颜色" filled />
      <div className="ml-11">
        <label className="flex w-[62px] flex-col text-center text-xl leading-7 text-[#333333]">
          <input defaultValue="0" className={clsx('mb-2 h-10 w-full', field)} />
          <span>线宽</span>
        </label>
        <svg width="30" height="30" viewBox="0 0 30 30" fill="none" stroke="#8c8c8c" strokeWidth="4" strokeDasharray="5 4" className="ml-5 mt-[38px]">
          <rect x="2" y="2" width="26" height="26" />
        </svg>
      </div>
    </div>
  </aside>
);

/* ---------- App ---------- */

export default function App() {
  return (
    <div className="flex h-screen flex-col overflow-hidden bg-white font-['Open_Sans','Noto_Sans_CJK_SC',sans-serif]">
      <header className="relative flex h-12 shrink-0 items-start justify-center border-b-2 border-[#c4c6c4] bg-[#eff1ec]">
        <div className="absolute left-3.5 top-1.5 flex gap-4">
          <span className="size-6 rounded-full border border-[#e0a030] bg-[#fdbc40]" />
          <span className="size-6 rounded-full border border-[#18ac3c] bg-[#1fc94c]" />
        </div>
        <div className="flex items-center gap-3.5 pr-8">
          <svg width="22" height="28" viewBox="0 0 22 28">
            <path d="M2 0H16L22 6V26Q22 28 20 28H2Q0 28 0 26V2Q0 0 2 0Z" fill="#009ddc" />
            <path d="M16 0L22 6H16Z" fill="#00628f" />
            <path d="M6 10C10 10 12 22 16 22M16 10L6 22" stroke="#fff" strokeWidth="2" fill="none" />
          </svg>
          <h1 className="text-[26px] font-bold leading-[34px] text-[#4a4a4a] [font-family:'Inter','Noto_Sans_CJK_SC',sans-serif]">
            14.原型模板 - Axure RP 9 Enterprise Edition : 已授权 &gt; MacWk.com
          </h1>
        </div>
      </header>
      <Toolbar />
      <div className="flex min-h-0 flex-1">
        <aside className="flex w-[480px] shrink-0 flex-col overflow-hidden border-r-2 border-[#d0d0d0] bg-white">
          <PagesPanel />
          <WidgetsPanel />
        </aside>
        <main className="flex min-w-0 flex-1 flex-col border-r-2 border-[#d0d0d0]">
          <TabStrip />
          <TopRuler />
          <div className="flex min-h-0 flex-1">
            <SideRuler />
            <Stage />
          </div>
        </main>
        <StylePanel />
      </div>
    </div>
  );
}
